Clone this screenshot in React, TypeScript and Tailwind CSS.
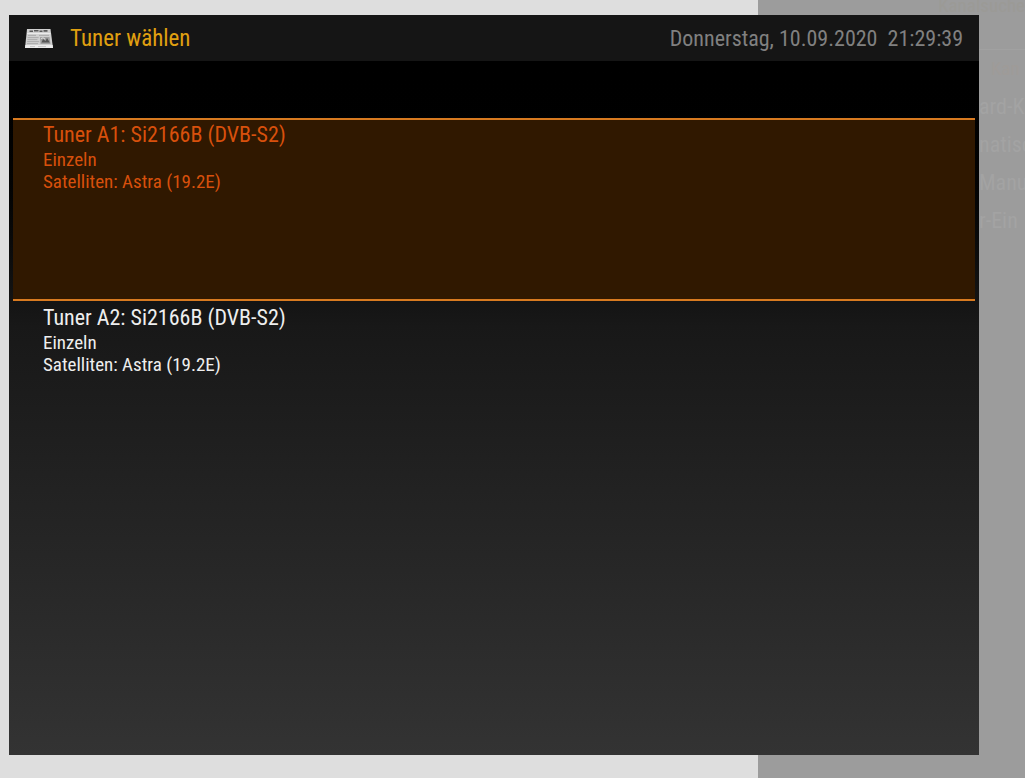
import React, { useState } from 'react';

interface Tuner {
  id: string;
  name: string;
  mode: string;
  satellites: string;
}

const tuners: Tuner[] = [
  { id: 'a1', name: 'Tuner A1: Si2166B (DVB-S2)', mode: 'Einzeln', satellites: 'Satelliten: Astra (19.2E)' },
  { id: 'a2', name: 'Tuner A2: Si2166B (DVB-S2)', mode: 'Einzeln', satellites: 'Satelliten: Astra (19.2E)' },
];

const menuEntries = ['ard-K', 'natisc', 'Manu', 'r-Ein'];

const NewspaperIcon: React.FC<{ className?: string }> = ({ className }) => (
  <svg className={className} viewBox="0 0 28 20" aria-hidden="true">
    <path d="M2 0h23.5L28 19H0z" fill="#cfcfcf" />
    <path d="M.4 16h27.2l.4 3H0z" fill="#ececec" />
    <path d="M4.5 2.2h3.5M9 1.8h4.5M14.5 2.2h3M18.5 1.9h4" stroke="#5a5a5a" strokeWidth="1.6" />
    <path d="M2 4.6h23.5" stroke="#eee" strokeWidth="1" />
    <path d="M3 6.4h8M2.6 8.6h11M2.4 10.6h10M2.2 12.6h12M2 14.6h11" stroke="#a2a2a2" strokeWidth=".8" />
    <path d="M14 6.4h10" stroke="#a2a2a2" strokeWidth=".8" />
    <path d="M15 8h9.5l1 7h-10z" fill="#a0a0a0" />
    <path d="M16.5 13.5l1.5-3.5 2.5 2L22 9l2.8 4.5z" fill="#555" />
    <path d="M16 9.6l2-.8 2 1.2" stroke="#ddd" strokeWidth="1" fill="none" />
    <path d="M5 17.6h5M13 17.6h8" stroke="#bbb" strokeWidth=".8" />
  </svg>
);

const BackgroundMenu: React.FC = () => (
  <aside className="w-[267px] shrink-0 overflow-hidden bg-[#9c9c9c] text-[22px] whitespace-nowrap text-[#a3a3a3]">
    <div className="flex h-[50px] justify-end border-b border-[#a1a1a1] text-[19px] leading-3 text-[#9b9a96]">Kanalsuche</div>
    <div className="pl-[221px]">
      <div className="h-[38px] pl-3 text-[19px] leading-[38px] text-[#9f9b98]">Kan</div>
      {menuEntries.map((entry) => (
        <div key={entry} className="h-[38px] leading-[38px]">{entry}</div>
      ))}
    </div>
  </aside>
);

const App: React.FC = () => {
  const [selected, setSelected] = useState('a1');

  return (
    <div className="grid min-h-screen grid-cols-1 overflow-hidden bg-[#dedede] font-['Roboto_Condensed','Roboto',sans-serif]">
      <div className="col-start-1 row-start-1 flex justify-end">
        <BackgroundMenu />
      </div>
      <main className="z-10 col-start-1 row-start-1 mt-[15px] mr-[46px] mb-[23px] ml-[9px] flex flex-col bg-linear-to-b from-black from-5% via-[#181818] via-42% to-[#333333]">
        <header className="flex h-[46px] items-center justify-between bg-[#151515] px-4 pt-0.5 text-[22px] leading-8">
          <div className="flex items-center gap-4">
            <NewspaperIcon className="h-5 w-7" />
            <h1 className="pl-px text-[23px] leading-8 text-[#e0a010]">Tuner wählen</h1>
          </div>
          <time className="whitespace-pre text-[#808080]">Donnerstag, 10.09.2020  21:29:39</time>
        </header>
        <ul className="mx-1 mt-[57px]">
          {tuners.map((tuner) => (
            <li key={tuner.id}>
              <button
                type="button"
                onClick={() => setSelected(tuner.id)}
                className={`flex h-[183px] w-full flex-col items-start border-y-2 pl-[30px] pt-px text-left ${tuner.id === selected ? 'border-[#d87a20] bg-[#301800] text-[#d8500c]' : 'border-transparent text-[#eeeeee]'}`}
              >
                <span className="text-[22px] leading-7">{tuner.name}</span>
                <span className="text-[19px] leading-[22px]">{tuner.mode}</span>
                <span className="text-[19px] leading-[22px]">{tuner.satellites}</span>
              </button>
            </li>
          ))}
        </ul>
      </main>
    </div>
  );
};

export default App;
